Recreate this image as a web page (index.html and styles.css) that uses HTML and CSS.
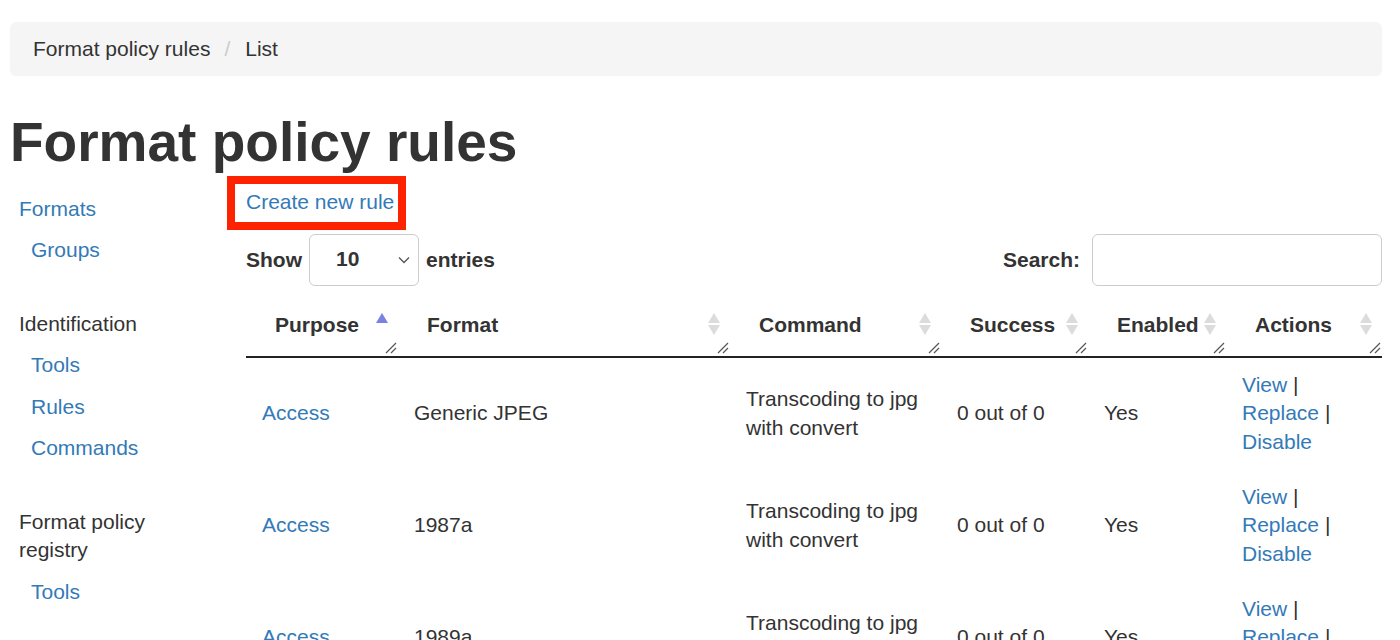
FILE: index.html
```html
<!DOCTYPE html>
<html lang="en">
<head>
<meta charset="utf-8">
<title>Format policy rules</title>
<link rel="stylesheet" href="styles.css">
</head>
<body>
<div class="page">
  <nav class="breadcrumb">
    <span class="crumb">Format policy rules</span>
    <span class="crumb-sep">/</span>
    <span class="crumb">List</span>
  </nav>

  <h1 class="title">Format policy rules</h1>

  <div class="layout">
    <aside class="sidebar">
      <ul class="nav-group">
        <li class="nav-top"><a href="#">Formats</a></li>
        <li class="nav-item"><a href="#">Groups</a></li>
      </ul>
      <ul class="nav-group">
        <li class="nav-head">Identification</li>
        <li class="nav-item"><a href="#">Tools</a></li>
        <li class="nav-item"><a href="#">Rules</a></li>
        <li class="nav-item"><a href="#">Commands</a></li>
      </ul>
      <ul class="nav-group">
        <li class="nav-head">Format policy registry</li>
        <li class="nav-item"><a href="#">Tools</a></li>
      </ul>
    </aside>

    <main class="main">
      <div class="create-row">
        <span class="highlight"><a href="#">Create new rule</a></span>
      </div>

      <div class="controls">
        <label class="length">
          <span>Show</span>
          <span class="select">
            <span class="select-value">10</span>
            <svg class="chevron" width="12" height="8" viewBox="0 0 12 8"><path d="M1 1.5 L6 6.5 L11 1.5" fill="none" stroke="#555" stroke-width="1.3"/></svg>
          </span>
          <span>entries</span>
        </label>
        <label class="search">
          <span>Search:</span>
          <span class="search-input"></span>
        </label>
      </div>

      <table class="rules">
        <colgroup>
          <col class="c-purpose"><col class="c-format"><col class="c-command"><col class="c-success"><col class="c-enabled"><col class="c-actions">
        </colgroup>
        <thead>
          <tr>
            <th>Purpose
              <svg class="sort" width="12" height="22" viewBox="0 0 12 22"><path d="M6 0 L12 10 L0 10 Z" fill="#7b80e3"/></svg>
              <svg class="grip" width="12" height="13" viewBox="0 0 12 13"><path d="M1 12 L11 2 M6 12 L11 7" stroke="#555" stroke-width="1.2" fill="none"/></svg>
            </th>
            <th>Format
              <svg class="sort" width="12" height="22" viewBox="0 0 12 22"><path d="M6 0 L12 10 L0 10 Z M0 12 L12 12 L6 22 Z" fill="#dcdcdc"/></svg>
              <svg class="grip" width="12" height="13" viewBox="0 0 12 13"><path d="M1 12 L11 2 M6 12 L11 7" stroke="#555" stroke-width="1.2" fill="none"/></svg>
            </th>
            <th>Command
              <svg class="sort" width="12" height="22" viewBox="0 0 12 22"><path d="M6 0 L12 10 L0 10 Z M0 12 L12 12 L6 22 Z" fill="#dcdcdc"/></svg>
              <svg class="grip" width="12" height="13" viewBox="0 0 12 13"><path d="M1 12 L11 2 M6 12 L11 7" stroke="#555" stroke-width="1.2" fill="none"/></svg>
            </th>
            <th>Success
              <svg class="sort" width="12" height="22" viewBox="0 0 12 22"><path d="M6 0 L12 10 L0 10 Z M0 12 L12 12 L6 22 Z" fill="#dcdcdc"/></svg>
              <svg class="grip" width="12" height="13" viewBox="0 0 12 13"><path d="M1 12 L11 2 M6 12 L11 7" stroke="#555" stroke-width="1.2" fill="none"/></svg>
            </th>
            <th>Enabled
              <svg class="sort" width="12" height="22" viewBox="0 0 12 22"><path d="M6 0 L12 10 L0 10 Z M0 12 L12 12 L6 22 Z" fill="#dcdcdc"/></svg>
              <svg class="grip" width="12" height="13" viewBox="0 0 12 13"><path d="M1 12 L11 2 M6 12 L11 7" stroke="#555" stroke-width="1.2" fill="none"/></svg>
            </th>
            <th>Actions
              <svg class="sort" width="12" height="22" viewBox="0 0 12 22"><path d="M6 0 L12 10 L0 10 Z M0 12 L12 12 L6 22 Z" fill="#dcdcdc"/></svg>
              <svg class="grip" width="12" height="13" viewBox="0 0 12 13"><path d="M1 12 L11 2 M6 12 L11 7" stroke="#555" stroke-width="1.2" fill="none"/></svg>
            </th>
          </tr>
        </thead>
        <tbody>
          <tr>
            <td><a href="#">Access</a></td>
            <td>Generic JPEG</td>
            <td>Transcoding to jpg with convert</td>
            <td>0 out of 0</td>
            <td>Yes</td>
            <td><a href="#">View</a> | <a href="#">Replace</a> | <a href="#">Disable</a></td>
          </tr>
          <tr>
            <td><a href="#">Access</a></td>
            <td>1987a</td>
            <td>Transcoding to jpg with convert</td>
            <td>0 out of 0</td>
            <td>Yes</td>
            <td><a href="#">View</a> | <a href="#">Replace</a> | <a href="#">Disable</a></td>
          </tr>
          <tr>
            <td><a href="#">Access</a></td>
            <td>1989a</td>
            <td>Transcoding to jpg with convert</td>
            <td>0 out of 0</td>
            <td>Yes</td>
            <td><a href="#">View</a> | <a href="#">Replace</a> | <a href="#">Disable</a></td>
          </tr>
        </tbody>
      </table>
    </main>
  </div>
</div>
</body>
</html>
```
FILE: styles.css
```css
html {
  overflow: hidden;
}
body {
  margin: 0;
  font-family: "Liberation Sans", Arial, sans-serif;
  font-size: 21px;
  line-height: 28.5px;
  color: #333;
  background: #fff;
}
a {
  color: #337ab7;
  text-decoration: none;
}
.page {
  padding: 22px 18px 0 10px;
}

/* breadcrumb */
.breadcrumb {
  display: flex;
  align-items: center;
  height: 54px;
  padding: 1px 23px 0;
  background: #f5f5f5;
  border-radius: 6px;
  box-sizing: border-box;
}
.crumb-sep {
  color: #ccc;
  margin: 0 15px 0 14px;
}

/* title */
.title {
  margin: 35px 0 0 0;
  font-size: 55px;
  line-height: 62px;
  font-weight: bold;
  color: #333;
}

/* layout */
.layout {
  display: flex;
}
.sidebar {
  width: 236px;
  flex: none;
  padding: 15px 40px 0 9px;
  box-sizing: border-box;
}
.nav-group {
  list-style: none;
  margin: 0;
  padding: 0;
}
.nav-group + .nav-group {
  margin-top: 32px;
}
.nav-top,
.nav-head,
.nav-item {
  padding: 6.5px 0;
}
.nav-head {
  color: #333;
}
.nav-item {
  padding-left: 12px;
}

.main {
  flex: 1;
  min-width: 0;
}

/* create link with annotation box */
.create-row {
  margin-top: 3px;
}
.highlight {
  display: inline-block;
  border: 8px solid #fe2300;
  padding: 4px 4px 5px 11px;
  margin-left: -19px;
}
.highlight a {
  display: block;
}

/* controls */
.controls {
  display: flex;
  justify-content: space-between;
  align-items: center;
  margin-top: 4px;
  font-weight: bold;
}
.length,
.search {
  display: flex;
  align-items: center;
}
.length > span:first-child,
.length > span:last-child,
.search > span:first-child {
  padding-top: 2px;
}
.select {
  display: flex;
  align-items: center;
  justify-content: space-between;
  width: 110px;
  height: 52px;
  margin: 0 7px;
  padding: 0 8px 0 26px;
  box-sizing: border-box;
  border: 1px solid #ccc;
  border-radius: 6px;
}
.chevron {
  display: block;
}
.search-input {
  display: block;
  width: 290px;
  height: 52px;
  margin-left: 12px;
  box-sizing: border-box;
  border: 1px solid #ccc;
  border-radius: 6px;
}

/* table */
.rules {
  width: 100%;
  table-layout: fixed;
  border-collapse: collapse;
  margin-top: 10px;
}
.c-purpose { width: 152px; }
.c-format { width: 332px; }
.c-command { width: 211px; }
.c-success { width: 147px; }
.c-enabled { width: 138px; }
.c-actions { width: 156px; }

.rules th {
  position: relative;
  text-align: left;
  font-weight: bold;
  padding: 15.75px 10px 15.75px 29px;
  border-bottom: 2px solid #222;
  white-space: nowrap;
}
.rules th .sort {
  position: absolute;
  right: 10px;
  top: 17px;
}
.rules th .grip {
  position: absolute;
  right: 1px;
  bottom: 2px;
}
.rules td {
  padding: 13.25px 16px;
  vertical-align: middle;
}
```
